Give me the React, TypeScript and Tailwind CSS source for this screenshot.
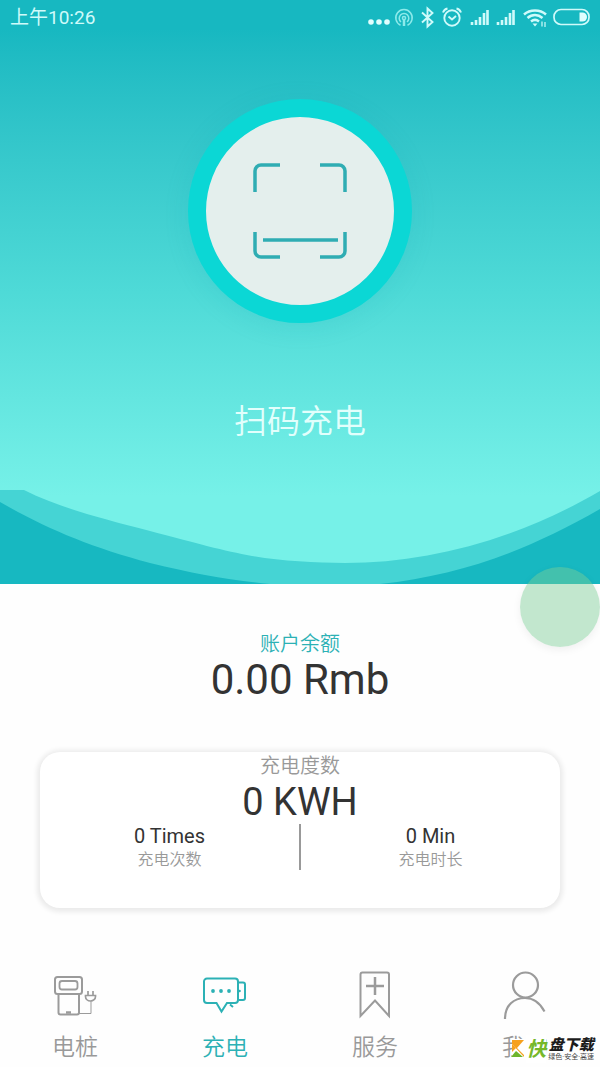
import type { ReactNode } from "react";

function StatusIcons() {
  return (
    <svg viewBox="0 0 230 28" className="h-7 w-[230px] shrink-0" fill="none" stroke="#cffafa" strokeWidth="1.6" aria-hidden="true">
      {/* notification dots */}
      <g fill="#dffefe" stroke="none">
        <circle cx="11" cy="18" r="2.8" />
        <circle cx="19" cy="18" r="2.8" />
        <circle cx="27" cy="18" r="2.8" />
      </g>
      {/* hotspot */}
      <g stroke="#8ceaea" strokeWidth="1.5">
        <path d="M40.5 21.2a8.2 8.2 0 1 1 7 0" />
        <path d="M41 18a4.8 4.8 0 1 1 6 0" />
        <circle cx="44" cy="14" r="1.6" />
        <path d="M44 16v6" strokeWidth="2.5" />
      </g>
      {/* bluetooth */}
      <path d="M62 8.500l10.500 9.500-5 4.500V4.500l5 4.500L62 18.500" strokeWidth="1.900" />
      {/* alarm */}
      <circle cx="92" cy="14" r="7.700" strokeWidth="1.900" />
      <path d="M88.500 12.500l3.500 3 4-3.500M83 8.500a6 6 0 0 1 4.500-4M101 8.500a6 6 0 0 0-4.500-4" strokeWidth="1.900" />
      {/* signal bars */}
      <g strokeWidth="2.600">
        <path d="M112 21v-3M116 21v-5M120 21v-8M124 21V9M127.500 21V6" />
        <path d="M138 21v-3M142 21v-5M146 21v-8M150 21V9M153.500 21V6" />
      </g>
      {/* wifi */}
      <path d="M164 10.500c6-5.300 16-5.300 22 0M167.500 14c4.500-4 10.500-4 15 0M171 17.500c2.500-2 5.500-2 8 0" strokeWidth="2.500" />
      <path d="M172.500 19.500h5l-2.500 3z" fill="#cffafa" stroke="none" />
      <path d="M182 17.500v5M185 18v5" strokeWidth="1.200" />
      {/* battery */}
      <rect x="194" y="5.500" width="35" height="15" rx="7" strokeWidth="1.700" />
      <path d="M219.500 8.500h3a4.500 4.500 0 0 1 0 9h-3z" fill="#dffefe" stroke="none" />
    </svg>
  );
}

function ScanIcon() {
  return (
    <svg viewBox="0 0 94 96" className="h-24 w-[94px]" fill="none" stroke="#2fadb3" strokeWidth="3.500" aria-hidden="true">
      <path d="M2 29V8a6 6 0 0 1 6-6h19" />
      <path d="M67 2h19a6 6 0 0 1 6 6v21" />
      <path d="M2 69v19a6 6 0 0 0 6 6h19" />
      <path d="M67 94h19a6 6 0 0 0 6-6V69" />
      <path d="M10 77h75" />
    </svg>
  );
}

function Waves() {
  return (
    <svg viewBox="0 0 600 94" preserveAspectRatio="none" className="block h-[94px] w-full" aria-hidden="true">
      <path
        fill="#45d4d4"
        d="M0 0H24C60 18 100 28 150 41C195 53 225 61 252 66C280 71 315 73 345 73C430 73 520 48 600 1V94H0Z"
      />
      <path fill="#17b8c1" d="M0 12C45 38 90 57 150 73C195 84 230 90 270 94H0Z" />
      <path fill="#17b8c1" d="M380 94C460 85 525 62 600 19V94Z" />
    </svg>
  );
}

function StationIcon() {
  return (
    <svg viewBox="0 0 48 50" className="h-[50px] w-12" fill="none" stroke="#9b9b9b" strokeWidth="2" aria-hidden="true">
      <rect x="4" y="7" width="27" height="17" rx="2.500" />
      <rect x="8.500" y="11" width="18" height="8.500" rx="2.500" strokeWidth="1.800" />
      <path d="M7.500 24v18.500a2 2 0 0 0 2 2H26a2 2 0 0 0 2-2V24" />
      <path d="M15 42.500h5" strokeWidth="2.500" />
      <path d="M28 43.500h12V31" strokeWidth="1" />
      <path d="M34.500 25.500h10v1a5 4.500 0 0 1-10 0zM37 21v4M42 21v4" strokeWidth="1.700" />
    </svg>
  );
}

function ChatIcon() {
  return (
    <svg viewBox="0 0 48 50" className="h-[50px] w-12" fill="none" stroke="#2cb1b5" strokeWidth="2" aria-hidden="true">
      <path d="M6 8.500h28a3 3 0 0 1 3 3V30a3 3 0 0 1-3 3h-8l-5.500 8.500-5-8.500H6a3 3 0 0 1-3-3V11.500a3 3 0 0 1 3-3z" />
      <path d="M37.500 12.500H42a2 2 0 0 1 2 2V28a2 2 0 0 1-2 2h-4.500M29 34.500l3 2.500" />
      <g fill="#2cb1b5" stroke="none">
        <circle cx="12" cy="21" r="1.900" />
        <circle cx="20" cy="21" r="1.900" />
        <circle cx="28" cy="21" r="1.900" />
        <circle cx="38.500" cy="21" r="1.300" />
      </g>
    </svg>
  );
}

function ServiceIcon() {
  return (
    <svg viewBox="0 0 48 50" className="h-[50px] w-12" fill="none" stroke="#9b9b9b" strokeWidth="2" aria-hidden="true">
      <path d="M9.500 46V4.500a2 2 0 0 1 2-2h24.500a2 2 0 0 1 2 2V46L24 30.500z" />
      <path d="M24 7v18M15 16h18" strokeWidth="2.500" />
    </svg>
  );
}

function ProfileIcon() {
  return (
    <svg viewBox="0 0 48 50" className="h-[50px] w-12" fill="none" stroke="#9b9b9b" strokeWidth="2.200" aria-hidden="true">
      <circle cx="24.500" cy="15" r="12.500" />
      <path d="M4 49C4 35 13 28 24 28c8 0 15 5 19.500 13.500" />
    </svg>
  );
}

function NavItem({ icon, label, active = false }: { icon: ReactNode; label: string; active?: boolean }) {
  return (
    <button
      type="button"
      aria-current={active ? "page" : undefined}
      className={`flex flex-1 flex-col items-center gap-3 text-[23px] leading-8 font-[350] ${active ? "text-[#2cb1b5]" : "text-[#999999]"}`}
    >
      {icon}
      <span>{label}</span>
    </button>
  );
}

function Stat({ value, label }: { value: string; label: string }) {
  return (
    <div className="flex flex-1 flex-col items-center">
      <span className="text-[20px] leading-6 text-[#333333]">{value}</span>
      <span className="text-[16px] leading-6 font-[350] text-[#999999]">{label}</span>
    </div>
  );
}

function Watermark() {
  return (
    <div className="absolute right-1.5 bottom-1 flex items-center">
      <svg viewBox="0 0 16 20" className="h-5 w-4" aria-hidden="true">
        <path fill="#fff" d="M2 0h14v20H2z" />
        <path fill="#f6a11f" d="M2 1h12L7 9l7 7v2L2 5z" />
        <path fill="#f6a11f" d="M2 5v8l4-4z" />
        <path fill="#6eb52c" d="M1 18l5-6 7 6z" />
      </svg>
      <span className="bg-white text-[20px] leading-7 font-bold text-[#76b82a] italic">快</span>
      <div className="flex flex-col items-center pl-0.5">
        <span className="text-[15px] leading-4 font-black text-[#1c1c1c] italic">盘下载</span>
        <span className="text-[7px] leading-2 text-[#444444]">绿色·安全·高速</span>
      </div>
    </div>
  );
}

export default function App() {
  return (
    <div className="relative flex min-h-screen flex-col bg-[#fefefe] font-[Roboto,'Noto_Sans_CJK_SC',sans-serif]">
      <header className="flex flex-col bg-linear-to-b from-[#17b8c1] from-5% via-[#4edad7] via-50% to-[#76f1e8] to-85%">
        <div className="flex h-9 items-center justify-between pr-[10px] pl-[10px]">
          <span className="text-[19px] leading-6 text-[#cffafa]">上午10:26</span>
          <StatusIcons />
        </div>

        <div className="flex flex-col items-center pt-[63px]">
          <button
            type="button"
            aria-label="扫码充电"
            className="flex size-56 items-center justify-center rounded-full border-[18px] border-[#0bd7d5] bg-[#e4efed] shadow-[0_4px_24px_rgba(20,170,180,0.15)]"
          >
            <ScanIcon />
          </button>
          <h1 className="mt-[75px] mb-11 text-[33px] leading-12 font-[350] text-[#e2fffc]">扫码充电</h1>
        </div>
        <Waves />
      </header>

      <main className="relative flex flex-col">
        <button
          type="button"
          aria-label="悬浮按钮"
          className="absolute -top-[17px] right-0 size-20 rounded-full bg-[#79cc95]/45 shadow-[0_3px_8px_rgba(0,0,0,0.06)]"
        />
        <section className="flex flex-col items-center pt-12">
          <h2 className="text-[20px] leading-6 font-[350] text-[#2cb1b5]">账户余额</h2>
          <p className="text-[42px] leading-12 text-[#333333]">0.00 Rmb</p>
        </section>

        <section className="mx-10 mt-12 flex flex-col items-center rounded-[20px] bg-white pb-9 shadow-[0_1px_5px_3px_rgba(0,0,0,0.08)]">
          <h2 className="text-[20px] leading-7 font-[350] text-[#999999]">充电度数</h2>
          <p className="text-[38px] leading-11 text-[#333333]">0 KWH</p>
          <div className="flex w-full">
            <Stat value="0 Times" label="充电次数" />
            <div className="h-[46px] w-[2px] bg-[#999999]" />
            <Stat value="0 Min" label="充电时长" />
          </div>
        </section>
      </main>

      <nav className="mt-auto flex pb-[3px]">
        <NavItem icon={<StationIcon />} label="电桩" />
        <NavItem icon={<ChatIcon />} label="充电" active />
        <NavItem icon={<ServiceIcon />} label="服务" />
        <NavItem icon={<ProfileIcon />} label="我的" />
      </nav>
      <Watermark />
    </div>
  );
}
